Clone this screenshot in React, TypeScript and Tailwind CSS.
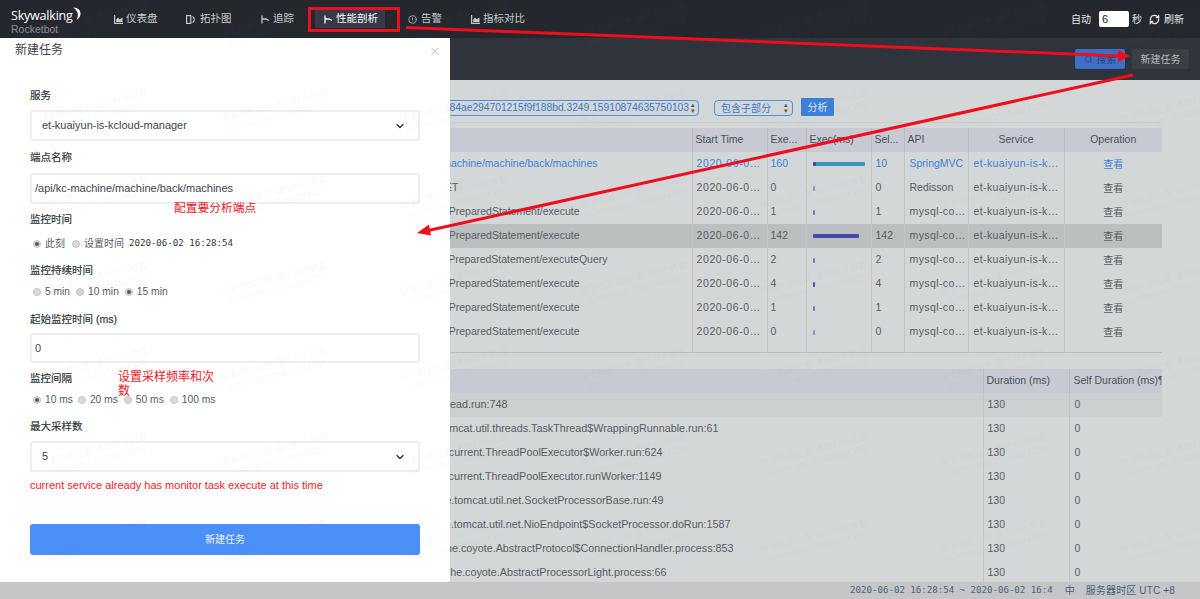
import React from "react";
import { ChevronDown, RefreshCw, Search, AlertCircle } from "lucide-react";

const sans = "font-['Liberation_Sans','Noto_Sans_CJK_SC',sans-serif]";
const mono = "font-['DejaVu_Sans_Mono','Noto_Sans_CJK_SC',monospace]";

function NavIcon({ kind }: { kind: "bar" | "flow" | "topo" | "alert" }) {
  if (kind === "alert") return <AlertCircle size={9} strokeWidth={2} className="mr-[4px]" />;
  if (kind === "topo")
    return (
      <svg width="10" height="9" viewBox="0 0 10 9" className="mr-[4px]" fill="none" stroke="currentColor" strokeWidth="1.2">
        <rect x="0.6" y="0.6" width="4.2" height="7.8" />
        <path d="M6.5 1.5a3.4 3.4 0 0 1 0 6" />
      </svg>
    );
  if (kind === "flow")
    return (
      <svg width="9" height="9" viewBox="0 0 9 9" className="mr-[3px]" fill="none" stroke="currentColor" strokeWidth="1.3">
        <path d="M1 0.5V8.5M1 4H5L8 5.5" />
      </svg>
    );
  return (
    <svg width="9" height="9" viewBox="0 0 9 9" className="mr-[3px]" fill="currentColor">
      <path d="M0 0h1.2v7.8H9V9H0z" />
      <path d="M2.2 7V4.2L4 2.8l1.6 1.4L8.5 2.6V7z" />
    </svg>
  );
}

const navItems: { label: string; kind: "bar" | "flow" | "topo" | "alert"; cls: string }[] = [
  { label: "仪表盘", kind: "bar", cls: "w-[72px] h-[18px]" },
  { label: "拓扑图", kind: "topo", cls: "w-[75px] h-[18px]" },
  { label: "追踪", kind: "flow", cls: "w-[54px] h-[18px]" },
  { label: "性能剖析", kind: "flow", cls: "w-[70px] h-[18px] pl-[9px] bg-[#363a48] text-white" },
  { label: "告警", kind: "alert", cls: "w-[63px] h-[18px] ml-[23px]" },
  { label: "指标对比", kind: "bar", cls: "w-[60px] h-[18px]" },
];

type Row = { pr: string; path: string; n: string; self: string; api: string; bar: string };

const jdbc = "Mysql/JDBI/PreparedStatement/execute";
const tick = "w-[2px] h-[5px] bg-[#6f78bd]";
const rows1: Row[] = [
  { pr: "pr-[94px]", path: "/api/kc-machine/machine/back/machines", n: "160", self: "10", api: "SpringMVC", bar: "w-[52px] h-[4px] bg-[#3a93b8] border-l-[3px] border-[#4a46a8]" },
  { pr: "pr-[233px]", path: "Redisson/GET", n: "0", self: "0", api: "Redisson", bar: "w-[2px] h-[5px] bg-[#6aa6c4]" },
  { pr: "pr-[112px]", path: jdbc, n: "1", self: "1", api: "mysql-connector", bar: tick },
  { pr: "pr-[112px]", path: jdbc, n: "142", self: "142", api: "mysql-connector", bar: "w-[46px] h-[4px] bg-[#4a46a8]" },
  { pr: "pr-[84px]", path: "Mysql/JDBI/PreparedStatement/executeQuery", n: "2", self: "2", api: "mysql-connector", bar: tick },
  { pr: "pr-[112px]", path: jdbc, n: "4", self: "4", api: "mysql-connector", bar: "w-[2px] h-[5px] bg-[#4a46a8]" },
  { pr: "pr-[112px]", path: jdbc, n: "1", self: "1", api: "mysql-connector", bar: tick },
  { pr: "pr-[112px]", path: jdbc, n: "0", self: "0", api: "mysql-connector", bar: "w-[2px] h-[5px] bg-[#6aa6c4]" },
];

const rows2: { pr: string; text: string }[] = [
  { pr: "pr-[475px]", text: "java.lang.Thread.run:748" },
  { pr: "pr-[264px]", text: "org.apache.tomcat.util.threads.TaskThread$WrappingRunnable.run:61" },
  { pr: "pr-[320px]", text: "java.util.concurrent.ThreadPoolExecutor$Worker.run:624" },
  { pr: "pr-[321px]", text: "java.util.concurrent.ThreadPoolExecutor.runWorker:1149" },
  { pr: "pr-[319px]", text: "org.apache.tomcat.util.net.SocketProcessorBase.run:49" },
  { pr: "pr-[252px]", text: "org.apache.tomcat.util.net.NioEndpoint$SocketProcessor.doRun:1587" },
  { pr: "pr-[249px]", text: "org.apache.coyote.AbstractProtocol$ConnectionHandler.process:853" },
  { pr: "pr-[316px]", text: "org.apache.coyote.AbstractProcessorLight.process:66" },
];

function Label({ children, cls }: { children: React.ReactNode; cls: string }) {
  return <div className={`text-[10.5px] leading-[14px] text-[#33383e] [-webkit-text-stroke:0.2px_#33383e] ${cls}`}>{children}</div>;
}

function Radio({ on, label, cls }: { on?: boolean; label: string; cls?: string }) {
  return (
    <span className={`inline-flex items-center leading-[14px] text-[#565c62] ${cls ?? ""}`}>
      <span className="w-[8px] h-[8px] rounded-full bg-[#d9d9d9] border border-[#c4c4c4] flex items-center justify-center mr-[4px]">
        {on && <span className="w-[4px] h-[4px] rounded-full bg-[#55585c]" />}
      </span>
      {label}
    </span>
  );
}

function Field({ value, select, cls }: { value: string; select?: boolean; cls: string }) {
  return (
    <div className={`flex items-center justify-between rounded-[3px] border-2 border-[#eceef0] text-[11px] text-[#3f444a] ${select ? "pl-[10px] pr-[12px]" : "pl-[3px]"} ${cls}`}>
      <span>{value}</span>
      {select && <ChevronDown size={12} strokeWidth={2.6} className="text-[#2c3038]" />}
    </div>
  );
}

const wm = Array.from({ length: 49 }, (_, i) => i);

export default function App() {
  return (
    <div className={`relative w-[1200px] h-[599px] overflow-hidden bg-[#d4d7d8] flex flex-col ${sans}`}>
      {/* top nav */}
      <header className="h-[38px] shrink-0 bg-[#24282e] flex items-center text-[#c5c8cc] text-[10.5px]">
        <div className="w-[114px] pl-[11px] pt-[6px] relative">
          <div className="text-[12.5px] leading-[14px] text-white font-['Open_Sans','Liberation_Sans',sans-serif] tracking-[-0.2px]">Skywalking</div>
          <div className="text-[10.5px] leading-[12px] text-[#8d9196]">Rocketbot</div>
          <svg className="absolute left-[72px] top-[4px]" width="9" height="13" viewBox="0 0 9 13" fill="#fff">
            <path d="M1 0.5C6 0.5 9 3.5 8.5 7.5C8.2 10 6.5 12 4.5 12.8C6 10.5 6.2 8 5.4 5.5C4.6 3.2 3 1.5 1 0.5Z" />
          </svg>
        </div>
        <nav className="flex items-center">
          {navItems.map((n) => (
            <div key={n.label} className={`flex items-center ${n.cls}`}>
              <NavIcon kind={n.kind} />
              <span className="whitespace-nowrap">{n.label}</span>
            </div>
          ))}
        </nav>
        <div className="ml-auto flex items-center pr-[16px] text-[#e6e7e9] text-[10px]">
          <span>自动</span>
          <div className="w-[30px] h-[16px] bg-white rounded-[2px] ml-[8px] mr-[3px] pl-[3px] text-[11px] leading-[16px] text-[#222]">6</div>
          <span className="mr-[7px]">秒</span>
          <RefreshCw size={11} strokeWidth={3} className="mr-[4px]" />
          <span>刷新</span>
        </div>
      </header>

      {/* sub bar */}
      <div className="h-[42px] shrink-0 bg-[#2f343c] flex items-center justify-end pr-[11px] text-[10px]">
        <button className="w-[50px] h-[20px] rounded-[2px] bg-[#3c70c6] text-[#24457c] flex items-center justify-center gap-[4px] mr-[7px]">
          <Search size={9} />
          搜索
        </button>
        <button className="w-[57px] h-[20px] rounded-[2px] bg-[#3a3e45] text-[#b5b8bb]">新建任务</button>
      </div>

      {/* main */}
      <main className="flex-1 min-h-0 pl-[40px] pr-[39px] text-[10.5px] text-[#565c62]">
        <div className="h-[43px] flex items-end justify-end pb-[6px] pr-[327px] border-b border-[#c8cbcc]">
          <div className="h-[16px] w-[300px] border border-[#4f8fe0] rounded-[4px] flex items-center justify-end pr-[3px] text-[#3a78c8] text-[10.25px] whitespace-nowrap overflow-hidden">
            <span>84ae294701215f9f188bd.3249.15910874635750103</span>
            <span className="ml-[2px] text-[7px] leading-[6px] flex flex-col text-[#555]"><span>▴</span><span>▾</span></span>
          </div>
          <div className="h-[16px] w-[79px] ml-[15px] border border-[#4f8fe0] rounded-[4px] flex items-center justify-between pl-[6px] pr-[4px] text-[#3a78c8] text-[10px]">
            <span>包含子部分</span>
            <span className="text-[7px] leading-[6px] flex flex-col text-[#555]"><span>▴</span><span>▾</span></span>
          </div>
          <button className="w-[33px] h-[18px] ml-[8px] bg-[#3c7fd9] text-[#dfe8f5] rounded-[1px] text-[10px]">分析</button>
        </div>

        <table className="table-fixed w-[1122px] mt-[5px] border-collapse">
          <colgroup>
            <col className="w-[652px]" />
            <col className="w-[75px]" />
            <col className="w-[39px]" />
            <col className="w-[65px]" />
            <col className="w-[33px]" />
            <col className="w-[64px]" />
            <col className="w-[96px]" />
            <col className="w-[98px]" />
          </colgroup>
          <thead>
            <tr className="h-[24px] bg-[#c7cad3] text-[#4a5056]">
              <th className="font-normal border-r border-[#b8bbc3]" />
              <th className="font-normal text-left pl-[3px] border-r border-[#b8bbc3]">Start Time</th>
              <th className="font-normal text-left pl-[3px] border-r border-[#b8bbc3]">Exe...</th>
              <th className="font-normal text-left pl-[3px] border-r border-[#b8bbc3]">Exec(ms)</th>
              <th className="font-normal text-left pl-[3px] border-r border-[#b8bbc3]">Sel...</th>
              <th className="font-normal text-left pl-[3px] border-r border-[#b8bbc3]">API</th>
              <th className="font-normal border-r border-[#b8bbc3]">Service</th>
              <th className="font-normal">Operation</th>
            </tr>
          </thead>
          <tbody>
            {rows1.map((r, i) => {
              const color = i === 0 ? "text-[#3d7fd9]" : "";
              return (
                <tr key={i} className={`h-[24px] ${i === 3 ? "bg-[#bcbfc0]" : ""} ${color}`}>
                  <td className={`text-right whitespace-nowrap overflow-hidden border-r border-[#c2c5c6] ${r.pr}`}>{r.path}</td>
                  <td className="pl-[4px] truncate tracking-[0.6px] border-r border-[#c2c5c6]">2020-06-02 16:28:54</td>
                  <td className="pl-[3px] border-r border-[#c2c5c6]">{r.n}</td>
                  <td className="pl-[6px] border-r border-[#c2c5c6]">
                    <div className={`rounded-[1px] ${r.bar}`} />
                  </td>
                  <td className="pl-[4px] border-r border-[#c2c5c6]">{r.self}</td>
                  <td className={`pl-[5px] truncate border-r border-[#c2c5c6] ${i >= 2 ? "tracking-[0.4px]" : ""}`}>{r.api}</td>
                  <td className="pl-[5px] truncate tracking-[0.4px] border-r border-[#c2c5c6]">et-kuaiyun-is-kcloud-manager</td>
                  <td className="text-center text-[10px]">查看</td>
                </tr>
              );
            })}
            <tr className="h-[8px] border-b border-[#b7babb]">
              <td className="border-r border-[#c2c5c6]" />
              <td className="border-r border-[#c2c5c6]" />
              <td className="border-r border-[#c2c5c6]" />
              <td className="border-r border-[#c2c5c6]" />
              <td className="border-r border-[#c2c5c6]" />
              <td className="border-r border-[#c2c5c6]" />
              <td className="border-r border-[#c2c5c6]" />
              <td />
            </tr>
          </tbody>
        </table>

        <table className="table-fixed w-[1122px] mt-[16px] border-collapse">
          <colgroup>
            <col className="w-[943px]" />
            <col className="w-[86px]" />
            <col className="w-[93px]" />
          </colgroup>
          <thead>
            <tr className="h-[24px] bg-[#c7cad3] text-[#4a5056]">
              <th className="font-normal border-r border-[#b8bbc3]" />
              <th className="font-normal text-left pl-[3px] border-r border-[#b8bbc3]">Duration (ms)</th>
              <th className="font-normal text-left pl-[4px] whitespace-nowrap overflow-hidden">Self Duration (ms)¶</th>
            </tr>
          </thead>
          <tbody>
            {rows2.map((r, i) => (
              <tr key={i} className={`h-[24px] ${i === 0 ? "bg-[#cdd0d1]" : ""}`}>
                <td className={`text-right text-[10.75px] whitespace-nowrap overflow-hidden border-r border-[#c2c5c6] ${r.pr}`}>{r.text}</td>
                <td className="pl-[4px] border-r border-[#c2c5c6]">130</td>
                <td className="pl-[5px]">0</td>
              </tr>
            ))}
          </tbody>
        </table>
      </main>

      {/* footer */}
      <footer className="absolute left-0 right-0 bottom-0 h-[17px] bg-[#c4c6c7] flex items-center justify-end pr-[25px] text-[10px] text-[#4c5f7a] whitespace-nowrap">
        <span className={`${mono} text-[9.1px]`}>2020-06-02 16:28:54 ~ 2020-06-02 16:4</span>
        <span className="ml-[12px]">中</span>
        <span className="ml-[11px] tracking-[0.15px]">服务器时区 UTC +8</span>
      </footer>

      {/* drawer */}
      <aside className="absolute left-0 top-[38px] w-[450px] h-[544px] bg-white px-[30px] rounded-br-[3px]">
        <div className="-mx-[15px] pt-[5px] flex justify-between text-[12px] leading-[15px] text-[#3e4349]">
          <span>新建任务</span>
          <span className="text-[17px] text-[#d6d6d6] -mr-[5px] pt-[1px]">×</span>
        </div>
        <Label cls="mt-[29px]">服务</Label>
        <Field select value="et-kuaiyun-is-kcloud-manager" cls="h-[31px] mt-[8px]" />
        <Label cls="mt-[9px]">端点名称</Label>
        <Field value="/api/kc-machine/machine/back/machines" cls="h-[31px] mt-[9px]" />
        <Label cls="mt-[8px]">监控时间</Label>
        <div className="mt-[11px] flex items-center h-[14px] text-[10px]">
          <Radio on label="此刻" cls="ml-[3px]" />
          <Radio label="设置时间" cls="ml-[7px]" />
          <span className={`ml-[5px] text-[9.1px] text-[#33383d] ${mono}`}>2020-06-02 16:28:54</span>
        </div>
        <Label cls="mt-[12px]">监控持续时间</Label>
        <div className="mt-[8px] flex items-center h-[14px] text-[10.25px]">
          <Radio label="5 min" cls="ml-[3px]" />
          <Radio label="10 min" cls="ml-[6px]" />
          <Radio on label="15 min" cls="ml-[6px]" />
        </div>
        <Label cls="mt-[13px]">起始监控时间 (ms)</Label>
        <Field value="0" cls="h-[30px] mt-[7px]" />
        <Label cls="mt-[8px]">监控间隔</Label>
        <div className="mt-[8px] flex items-center h-[14px] text-[10.25px]">
          <Radio on label="10 ms" cls="ml-[3px]" />
          <Radio label="20 ms" cls="ml-[5px]" />
          <Radio label="50 ms" cls="ml-[6px]" />
          <Radio label="100 ms" cls="ml-[6px]" />
        </div>
        <Label cls="mt-[12px]">最大采样数</Label>
        <Field select value="5" cls="h-[31px] mt-[8px]" />
        <div className="mt-[6px] text-[11px] leading-[14px] text-[#f5222d]">current service already has monitor task execute at this time</div>
        <button className="mt-[32px] w-full h-[31px] rounded-[3px] bg-[#4a90f8] text-[#e8f1ff] text-[10px]">新建任务</button>
      </aside>

      {/* watermarks */}
      <div className="absolute inset-0 pointer-events-none grid grid-cols-[repeat(7,180px)] auto-rows-[86px] pl-[30px] pt-[15px]">
        {wm.map((i) => (
          <div key={i} className="-rotate-[14deg] text-[9px] leading-[11px] text-[#7f868d]/8 text-center self-start w-[130px]">
            快手内部信息 请勿对外转载
            <br />
            sunhongbo 15910884329
          </div>
        ))}
      </div>

      {/* annotations */}
      <div className="absolute left-[308px] top-[7px] w-[92px] h-[25px] border-[3px] border-[#e8101c]" />
      <div className="absolute left-[174px] top-[200px] text-[11.75px] leading-[15px] text-[#f0141e]">配置要分析端点</div>
      <div className="absolute left-[118px] top-[370px] w-[100px] text-[12px] leading-[14px] text-[#f0141e]">设置采样频率和次数</div>
      <svg className="absolute inset-0 pointer-events-none" width="1200" height="599" viewBox="0 0 1200 599" fill="none">
        <path d="M406 27.5L1120 56" stroke="#ef0d1e" strokeWidth="3" />
        <path d="M1130 56L1118 50L1118 62Z" fill="#ef0d1e" />
        <path d="M1133 75L426 231" stroke="#ef0d1e" strokeWidth="3" />
        <path d="M417 233L429 224.5L431 235.5Z" fill="#ef0d1e" />
      </svg>
    </div>
  );
}
